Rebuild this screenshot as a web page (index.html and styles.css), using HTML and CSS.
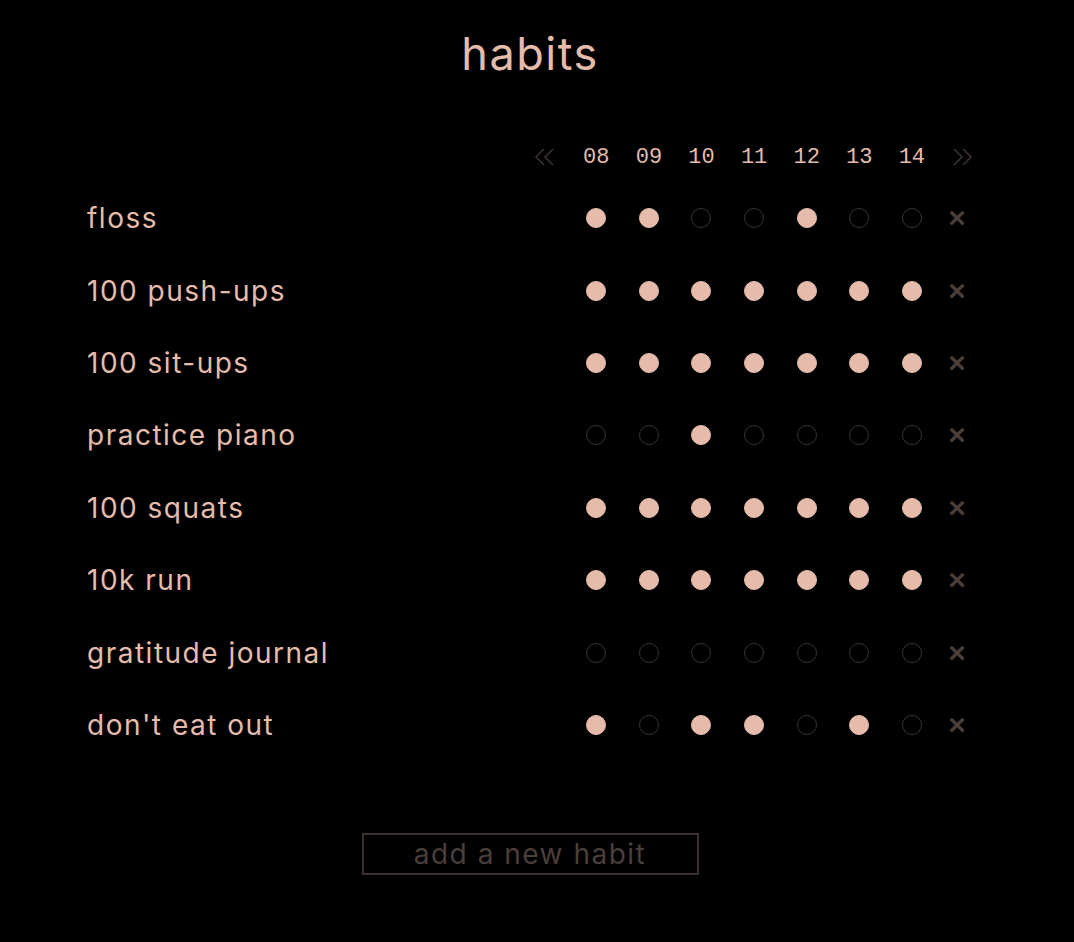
FILE: index.html
```html
<!DOCTYPE html>
<html lang="en">
<head>
    <meta charset="UTF-8">
    <meta name="viewport" content="width=device-width, initial-scale=1.0">
    <title>habits</title>
    <link rel="stylesheet" href="styles.css">
</head>
<body>
    <h1 class="title">habits</h1>

    <div class="grid" id="grid">
        <div class="name"></div>
        <div class="nav prev">
            <svg width="21" height="18" viewBox="0 0 21 18"><polyline points="10,1 2,9 10,17" /><polyline points="19,1 11,9 19,17" /></svg>
        </div>
        <div class="day">08</div>
        <div class="day">09</div>
        <div class="day">10</div>
        <div class="day">11</div>
        <div class="day">12</div>
        <div class="day">13</div>
        <div class="day">14</div>
        <div class="nav next">
            <svg width="21" height="18" viewBox="0 0 21 18"><polyline points="2,1 10,9 2,17" /><polyline points="11,1 19,9 11,17" /></svg>
        </div>
    </div>

    <div class="add-wrap">
        <button class="add">add a new habit</button>
    </div>

    <script>
        const habits = [
            ["floss", [1, 1, 0, 0, 1, 0, 0]],
            ["100 push-ups", [1, 1, 1, 1, 1, 1, 1]],
            ["100 sit-ups", [1, 1, 1, 1, 1, 1, 1]],
            ["practice piano", [0, 0, 1, 0, 0, 0, 0]],
            ["100 squats", [1, 1, 1, 1, 1, 1, 1]],
            ["10k run", [1, 1, 1, 1, 1, 1, 1]],
            ["gratitude journal", [0, 0, 0, 0, 0, 0, 0]],
            ["don't eat out", [1, 0, 1, 1, 0, 1, 0]]
        ];

        const grid = document.getElementById("grid");
        let html = "";
        habits.forEach(function (h) {
            html += '<div class="name row">' + h[0] + '</div><div class="row"></div>';
            h[1].forEach(function (done) {
                html += '<div class="row cell"><span class="dot' + (done ? ' done' : '') + '"></span></div>';
            });
            html += '<div class="row remove">&times;</div>';
        });
        grid.insertAdjacentHTML("beforeend", html);
    </script>
</body>
</html>
```
FILE: styles.css
```css
body {
    margin: 0;
    background-color: #000;
    color: #e5bcab;
    font-family: Inter, "Noto Sans", sans-serif;
}
.title {
    margin: 0;
    padding-top: 30px;
    height: 62px;
    text-align: center;
    font-size: 45px;
    font-weight: 400;
    line-height: 48px;
    letter-spacing: 1.5px;
    padding-right: 14px;
}
.grid {
    display: grid;
    grid-template-columns: 445px 38px repeat(7, 52.6px) 40px;
    grid-template-rows: 50px;
    grid-auto-rows: 72.4px;
    margin-top: 40px;
    padding-left: 87px;
    align-items: center;
}
.name {
    font-size: 28px;
    letter-spacing: 1.5px;
}
.day {
    text-align: center;
    font-family: "Liberation Mono", monospace;
    font-size: 22px;
}
.nav {
    display: flex;
    align-items: center;
    height: 50px;
}
.nav svg {
    fill: none;
    stroke: #3b3230;
    stroke-width: 1.6;
}
.prev {
    padding-left: 2px;
}
.next {
    padding-left: 14px;
}
.cell {
    display: flex;
    justify-content: center;
}
.dot {
    width: 18px;
    height: 18px;
    border: 1.5px solid #3d3431;
    border-radius: 50%;
}
.dot.done {
    background-color: #e5bcab;
    border-color: #e5bcab;
}
.remove {
    color: #4a3f3b;
    font-size: 30px;
    font-weight: 700;
    padding-left: 10px;
    font-family: "Liberation Sans", sans-serif;
}
.add-wrap {
    display: flex;
    justify-content: center;
    padding-right: 14px;
    margin-top: 72px;
}
.add {
    width: 337px;
    height: 42px;
    background: #000;
    border: 2px solid #3b3230;
    color: #4a3f3b;
    font-family: Inter, "Noto Sans", sans-serif;
    font-size: 28px;
    letter-spacing: 1.5px;
    padding: 0;
}
```
